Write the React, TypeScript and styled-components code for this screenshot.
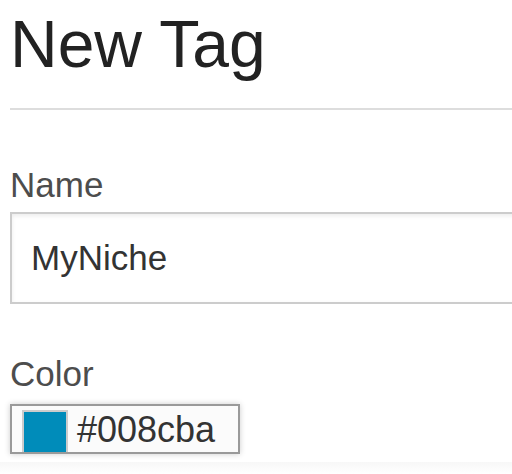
import React from "react";
import styled, { createGlobalStyle } from "styled-components";

const Global = createGlobalStyle`
  html, body { margin: 0; padding: 0; background: #fff; }
  body { font-family: "Liberation Sans", Arial, sans-serif; overflow: hidden; }
`;

const Page = styled.div`
  width: 512px;
  height: 474px;
  padding-left: 10px;
  box-sizing: border-box;
  overflow: hidden;
  display: flex;
  flex-direction: column;
`;

const Title = styled.h1`
  margin: 11px 0 0 0;
  font-size: 66px;
  line-height: 66px;
  font-weight: normal;
  color: #222;
`;

const Divider = styled.hr`
  margin: 31px 0 0 0;
  border: none;
  height: 2px;
  background: #ddd;
`;

const Field = styled.div<{ $top: number }>`
  display: flex;
  flex-direction: column;
  margin-top: ${(p) => p.$top}px;
`;

const Label = styled.label<{ $gap: number }>`
  font-size: 35px;
  line-height: 34px;
  color: #4d4d4d;
  margin-bottom: ${(p) => p.$gap}px;
`;

const TextInput = styled.div`
  width: 560px;
  height: 92px;
  box-sizing: border-box;
  border: 2px solid #ccc;
  background: #fff;
  box-shadow: inset 0 2px 4px rgba(0, 0, 0, 0.08);
  display: flex;
  align-items: center;
  padding-left: 19px;
  font-size: 35px;
  color: #333;
`;

const ColorBox = styled.div`
  width: 230px;
  height: 50px;
  box-sizing: border-box;
  border: 2px solid #9a9a9a;
  background: #fbfbfb;
  box-shadow: 0 0 6px rgba(0, 0, 0, 0.2);
  display: flex;
  align-items: stretch;
  padding: 4px 0 0 10px;
  gap: 9px;
  font-size: 36px;
  color: #333;
`;

const Swatch = styled.div<{ $color: string }>`
  width: 46px;
  box-sizing: border-box;
  border: 2px solid #ccc;
  border-bottom: none;
  background: ${(p) => p.$color};
`;

const ColorText = styled.span`
  align-self: center;
  margin-top: -2px;
`;

const NextField = styled.div`
  margin-top: 8px;
  margin-left: -10px;
  height: 12px;
  background: linear-gradient(#f7f7f7, #fff);
`;

export default function App() {
  return (
    <>
      <Global />
      <Page>
        <Title>New Tag</Title>
        <Divider />
        <Field $top={58}>
          <Label $gap={10}>Name</Label>
          <TextInput>MyNiche</TextInput>
        </Field>
        <Field $top={53}>
          <Label $gap={13}>Color</Label>
          <ColorBox>
            <Swatch $color="#008cba" />
            <ColorText>#008cba</ColorText>
          </ColorBox>
        </Field>
        <NextField />
      </Page>
    </>
  );
}
